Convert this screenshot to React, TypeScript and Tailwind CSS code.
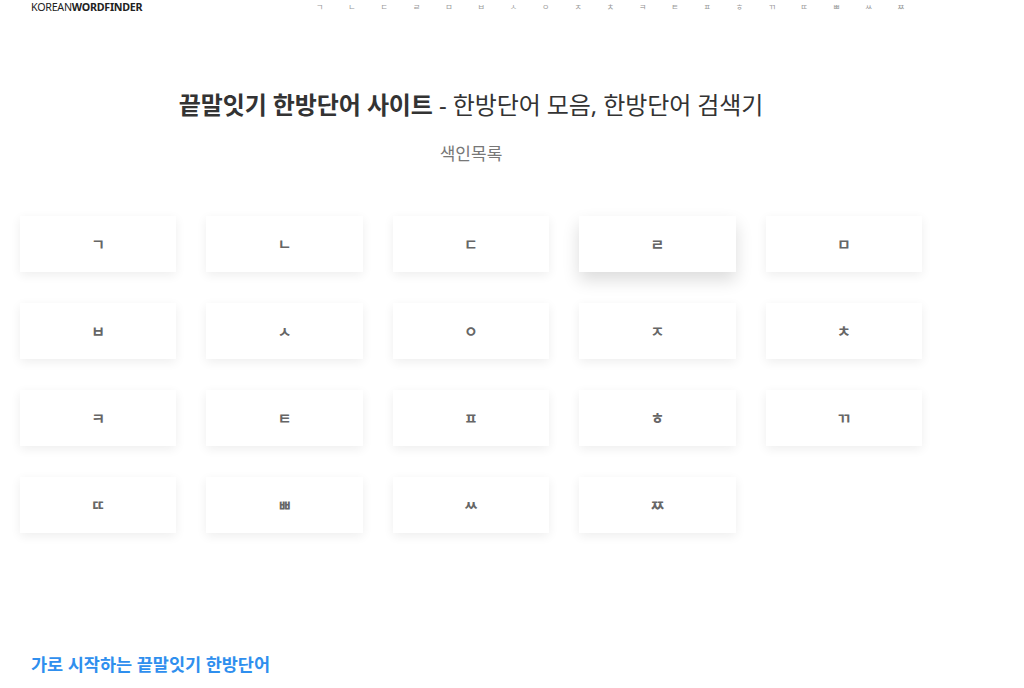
import React from 'react';

const NAV = ['ㄱ', 'ㄴ', 'ㄷ', 'ㄹ', 'ㅁ', 'ㅂ', 'ㅅ', 'ㅇ', 'ㅈ', 'ㅊ', 'ㅋ', 'ㅌ', 'ㅍ', 'ㅎ', 'ㄲ', 'ㄸ', 'ㅃ', 'ㅆ', 'ㅉ'];

export default function App() {
  return (
    <div
      className="min-h-[688px] bg-white text-[#333]"
      style={{ fontFamily: '"Noto Sans", "Noto Sans CJK KR", sans-serif' }}
    >
      {/* Header */}
      <div className="flex h-[14px] items-center">
        <div className="ml-[31px] w-[260px] text-[10.7px] leading-none tracking-[-0.25px] text-[#222]">
          KOREAN<span className="font-bold">WORDFINDER</span>
        </div>
        <nav className="ml-[25px] flex">
          {NAV.map((c) => (
            <span key={c} className="w-[32.3px] text-[8px] leading-none text-[#999]">
              {c}
            </span>
          ))}
        </nav>
      </div>

      <div className="w-[942px]">
        {/* Title */}
        <div className="mt-[74px] text-center">
          <h1 className="text-[24px] leading-[34px] tracking-[-0.1px] text-[#333]">
            <span className="font-bold">끝말잇기 한방단어 사이트</span> - 한방단어 모음, 한방단어 검색기
          </h1>
          <p className="mt-[20px] text-[17px] leading-[24px] text-[#777]">색인목록</p>
        </div>

        {/* Index grid */}
        <div className="mt-[50px] grid grid-cols-5 gap-x-[30px] gap-y-[31px] px-[20px]">
          {NAV.map((c) => (
            <a
              key={c}
              href="#"
              className={
                c === 'ㄹ'
                  ? 'flex h-[56px] items-center justify-center bg-white text-[15px] font-bold text-[#666] shadow-[0_8px_16px_rgba(0,0,0,0.14)]'
                  : 'flex h-[56px] items-center justify-center bg-white text-[15px] font-bold text-[#666] shadow-[0_3px_10px_rgba(0,0,0,0.07)]'
              }
            >
              {c}
            </a>
          ))}
        </div>
      </div>

      {/* Section heading */}
      <h2 className="ml-[31px] mt-[118px] text-[17.5px] font-bold leading-[26px] text-[#2f8fee]">
        가로 시작하는 끝말잇기 한방단어
      </h2>
    </div>
  );
}
